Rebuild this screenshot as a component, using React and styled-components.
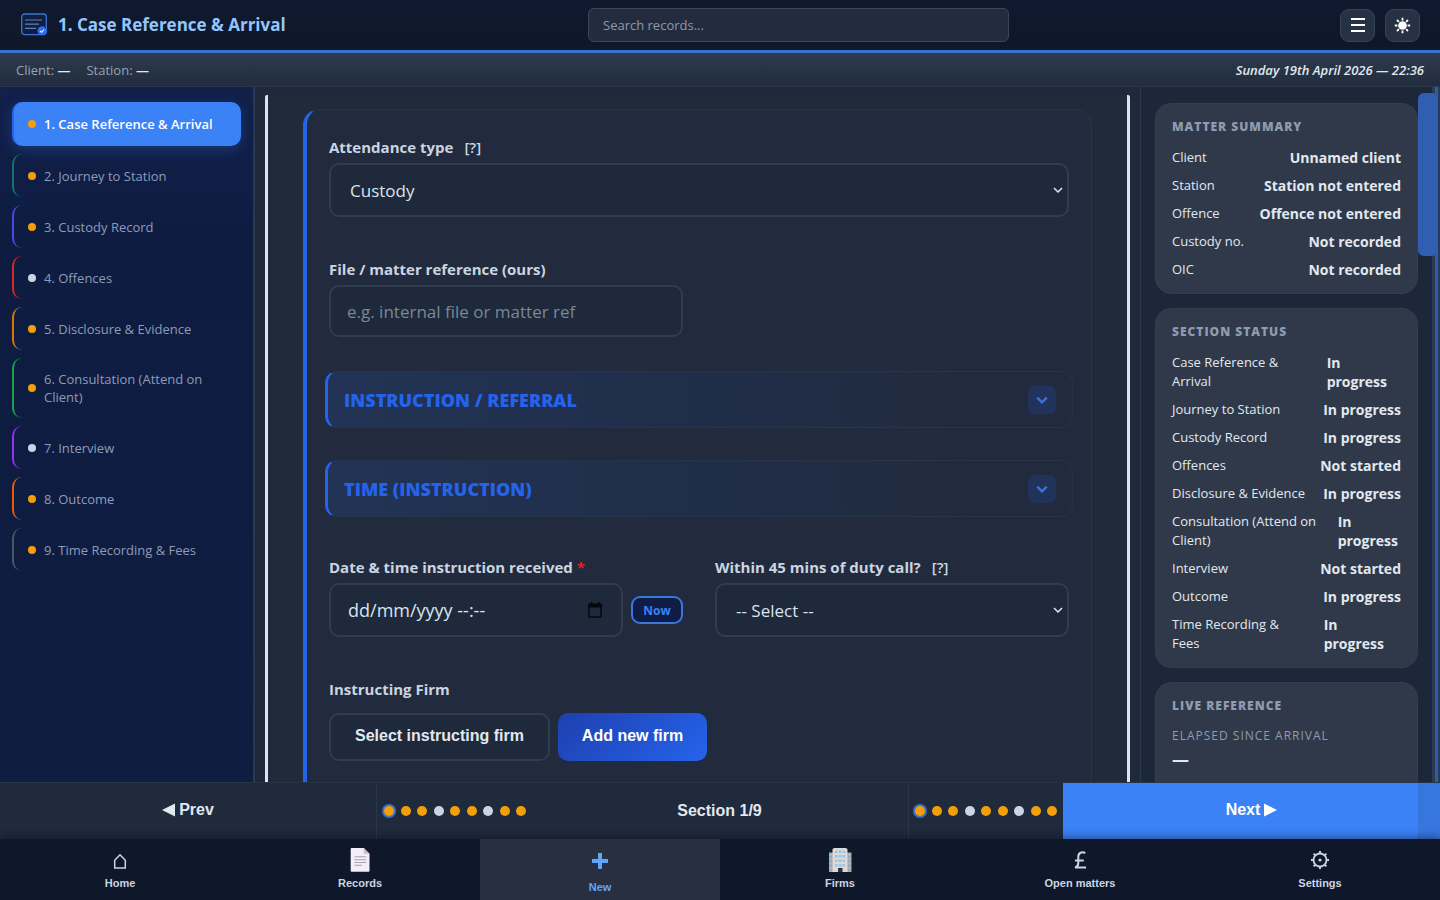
import React from 'react';
import styled, { createGlobalStyle, css } from 'styled-components';

const sans = '"Open Sans", "Noto Sans", sans-serif';
const ui = '"Liberation Sans", Arial, sans-serif';

const Global = createGlobalStyle`
  *, *::before, *::after { box-sizing: border-box; }
  body { margin: 0; background: #1e293b; color: #e2e8f0; font-family: ${sans}; }
  button, input, select { margin: 0; font: inherit; color: inherit; }
  button { cursor: pointer; }
  h1, h2, p, dl, dd, dt, ul { margin: 0; padding: 0; }
`;

const Page = styled.div`
  display: flex;
  flex-direction: column;
  height: 100vh;
  overflow: hidden;
`;

const Header = styled.header`
  display: grid;
  grid-template-columns: 568fr minmax(200px, 421px) 411fr;
  align-items: center;
  height: 53px;
  padding: 0 20px;
  flex: none;
  background: linear-gradient(#0f1a30, #0f172a);
  border-bottom: 3px solid #3b72d0;
`;
const Brand = styled.div`
  display: flex;
  align-items: center;
  gap: 10px;
`;
const Title = styled.h1`
  font-size: 17px;
  line-height: 24px;
  font-weight: 700;
  color: #93c5fd;
  white-space: nowrap;
`;
const Search = styled.input`
  width: 100%;
  height: 34px;
  padding: 0 14px;
  font-size: 13px;
  background: #232c3f;
  border: 1px solid #3b465a;
  border-radius: 6px;
  outline: none;
  &::placeholder { color: #8f98a8; opacity: 1; }
`;
const Tools = styled.div`
  display: flex;
  justify-content: flex-end;
  gap: 10px;
`;
const ToolButton = styled.button`
  display: grid;
  place-items: center;
  width: 35px;
  height: 33px;
  padding: 0;
  color: #fff;
  background: #273144;
  border: 1px solid #3a4456;
  border-radius: 9px;
`;

const InfoBar = styled.div`
  display: flex;
  align-items: center;
  gap: 16px;
  flex: none;
  height: 34px;
  padding: 0 16px;
  font-size: 13px;
  color: #94a3b8;
  background: linear-gradient(#2e3b4d, #212d3e);
  border-bottom: 1px solid #2b384b;
  b { color: #e2e8f0; }
`;
const Clock = styled.time`
  margin-left: auto;
  font-size: 13px;
  font-style: italic;
  font-weight: 600;
  color: #e2e8f0;
`;

const Body = styled.div`
  display: flex;
  flex: 1;
  min-height: 0;
  overflow: hidden;
`;

const Sidebar = styled.nav`
  display: flex;
  flex-direction: column;
  gap: 8px;
  flex: none;
  width: 255px;
  padding: 15px 12px;
  background: linear-gradient(#12204a, #0f1c42 20%, #101c40);
  border-right: 2px solid #2a3850;
`;
const NavItem = styled.button`
  display: flex;
  align-items: center;
  gap: 8px;
  width: 100%;
  min-height: 43px;
  padding: 4px 28px 4px 14px;
  font-size: 13px;
  line-height: 18px;
  font-weight: 500;
  text-align: left;
  color: #8c9cb8;
  background: transparent;
  border: 0 solid ${(p) => p.$accent};
  border-left-width: 2px;
  border-radius: 10px;
  ${(p) => p.$tall && css`min-height: 60px;`}
  ${(p) => p.$active && css`
    min-height: 44px;
    padding-right: 4px;
    font-weight: 600;
    color: #fff;
    background: #3b82f6;
    box-shadow: 0 4px 14px rgba(59, 130, 246, 0.25);
  `}
`;
const Dot = styled.span`
  flex: none;
  width: 8px;
  height: 8px;
  border-radius: 50%;
  background: ${(p) => (p.$done ? '#f59e0b' : '#cbd5e1')};
`;

const Main = styled.main`
  flex: 1;
  min-width: 0;
  margin: 8px 10px 0;
  padding: 14px 35px 0;
  overflow: hidden;
  background: #1f2a3b;
  border: solid #dbe4f0;
  border-width: 0 3px;
  border-radius: 2px 2px 0 0;
`;
const Card = styled.form`
  height: 900px;
  padding: 25px 22px;
  background: #212b3d;
  border: 1px solid #273549;
  border-left: 4px solid #2563eb;
  border-radius: 16px;
`;
const Fields = styled.div`
  display: grid;
  grid-template-columns: 1fr 1fr;
  column-gap: 32px;
`;
const Field = styled.div`
  display: flex;
  flex-direction: column;
  gap: 4px;
  margin-bottom: ${(p) => (p.$tight ? '34px' : '40px')};
  ${(p) => p.$wide && css`grid-column: 1 / -1;`}
`;
const Label = styled.label`
  font-size: 15px;
  line-height: 24px;
  font-weight: 700;
  color: #cbd5e1;
  white-space: pre;
  i { color: #dc2626; font-style: normal; }
`;
const Help = styled.span`
  margin-left: 11px;
  font-weight: 600;
`;
const control = css`
  width: 100%;
  height: 54px;
  font-family: ${sans};
  font-size: 17px;
  color: #dbe3ee;
  background: #1e293b;
  border: 2px solid #303c4f;
  border-radius: 10px;
  outline: none;
`;
const SelectWrap = styled.div`
  display: grid;
  align-items: center;
  > * { grid-area: 1 / 1; }
  > svg { justify-self: end; margin-right: 6px; pointer-events: none; }
`;
const Select = styled.select`
  ${control}
  padding: 0 19px;
  appearance: none;
`;
const TextInput = styled.input`
  ${control}
  height: 52px;
  padding: 0 16px;
  &::placeholder { color: #7b8798; opacity: 1; }
`;
const DateRow = styled.div`
  display: flex;
  align-items: center;
  gap: 8px;
`;
const DateBox = styled.div`
  display: grid;
  align-items: center;
  flex: 1;
  > * { grid-area: 1 / 1; }
  > svg { justify-self: end; margin-right: 20px; pointer-events: none; }
`;
const DateInput = styled.input`
  ${control}
  padding: 0 17px;
  font-size: 18px;
  &::placeholder { color: #dbe3ee; opacity: 1; }
`;
const NowButton = styled.button`
  width: 52px;
  height: 28px;
  padding: 0;
  font-size: 12px;
  font-weight: 700;
  color: #3b82f6;
  background: #0f1d45;
  border: 2px solid #3b76dc;
  border-radius: 9px;
`;

const Groups = styled.div`
  grid-column: 1 / -1;
  display: flex;
  flex-direction: column;
  gap: 32px;
  margin: 0 -4px 38px;
`;
const Group = styled.button`
  display: flex;
  align-items: center;
  justify-content: space-between;
  height: 57px;
  padding: 0 16px;
  font-size: 18px;
  font-weight: 800;
  color: #2563eb;
  background: linear-gradient(90deg, #223355, #202d47 55%, #212b3d 90%);
  border: 1px solid #263449;
  border-left: 3px solid #2563eb;
  border-radius: 12px;
`;
const Chevron = styled.span`
  display: grid;
  place-items: center;
  width: 28px;
  height: 28px;
  color: #3b72d8;
  background: #21335a;
  border-radius: 7px;
`;
const Actions = styled.div`
  display: flex;
  gap: 8px;
  margin-top: 8px;
`;
const FirmButton = styled.button`
  width: ${(p) => (p.$primary ? '149px' : '221px')};
  height: 48px;
  padding: 0 0 2px;
  font-family: ${ui};
  font-size: 16px;
  font-weight: 700;
  color: ${(p) => (p.$primary ? '#fff' : '#e2e8f0')};
  background: ${(p) => (p.$primary ? 'linear-gradient(135deg, #1e40af, #2563eb)' : '#1e293b')};
  border: ${(p) => (p.$primary ? '0' : '2px solid #303c4f')};
  border-radius: 10px;
`;

const Aside = styled.aside`
  display: flex;
  flex-direction: column;
  gap: 14px;
  flex: none;
  width: 278px;
  padding: 16px 0 0 14px;
  background: #1c2739;
  border-left: 1px solid #2a3850;
`;
const Panel = styled.section`
  flex: none;
  padding: 12px 16px 10px;
  background: #2f3949;
  border: 1px solid #333f50;
  border-radius: 16px;
`;
const PanelTitle = styled.h2`
  margin-bottom: 5px;
  font-size: 12px;
  line-height: 22px;
  font-weight: 800;
  letter-spacing: 1px;
  color: #8e9bb0;
`;
const Rows = styled.dl`
  display: flex;
  flex-direction: column;
`;
const Row = styled.div`
  display: flex;
  justify-content: space-between;
  gap: 8px;
  min-height: 28px;
  padding: 5px 0 4px;
  font-size: 13px;
  line-height: 19px;
  dt { white-space: pre-line; }
  dd {
    font-size: 14px;
    font-weight: 700;
    white-space: pre-line;
    padding-right: ${(p) => p.$inset || 0}px;
  }
`;
const Elapsed = styled.p`
  font-size: 12px;
  line-height: 28px;
  font-weight: 500;
  letter-spacing: 1px;
  color: #8e9bb0;
`;
const ElapsedValue = styled.p`
  font-size: 17px;
  line-height: 20px;
  height: 120px;
  font-weight: 700;
`;

const Track = styled.div`
  flex: none;
  width: 22px;
  background: linear-gradient(90deg, #1c2739 14px, #2c3b55 14px 17px, #2f5cab 17px 20px, #2c3b55 20px);
`;
const Thumb = styled.div`
  width: 20px;
  height: 163px;
  margin-top: 6px;
  background: #305fb2;
  border-radius: 6px;
`;

const Pager = styled.div`
  display: grid;
  grid-template-columns: 377fr 532fr 154fr 377fr;
  flex: none;
  height: 57px;
  background: #1f2a3c;
  border-top: 1px solid #263448;
  font-family: ${ui};
  font-size: 16px;
  font-weight: 700;
`;
const PagerButton = styled.button`
  display: flex;
  align-items: center;
  justify-content: center;
  gap: 4px;
  padding: 0 0 2px;
  border: 0;
  border-right: ${(p) => (p.$next ? '0' : '1px solid #2a374a')};
  color: ${(p) => (p.$next ? '#fff' : '#e2e8f0')};
  background: ${(p) => (p.$next
    ? 'linear-gradient(90deg, #3b82f6 calc(100% - 22px), #3876df calc(100% - 22px))'
    : 'transparent')};
`;
const PagerMiddle = styled.div`
  display: flex;
  align-items: center;
  padding-left: 7px;
  border-right: 1px solid #2a374a;
`;
const PagerLabel = styled.span`
  flex: 1;
  padding-left: 5px;
  text-align: center;
`;
const DotRow = styled.div`
  display: flex;
  flex: none;
  align-items: center;
  justify-content: space-between;
  width: 142px;
`;
const StepDot = styled.span`
  flex: none;
  width: 10px;
  height: 10px;
  border-radius: 50%;
  background: ${(p) => (p.$done ? '#f59e0b' : '#cbd5e1')};
  ${(p) => p.$current && css`box-shadow: 0 0 0 2px #3b72c8;`}
`;
const PagerDots = styled.div`
  display: flex;
  align-items: center;
  padding-left: 6px;
`;

const Tabs = styled.nav`
  display: grid;
  grid-template-columns: repeat(6, 1fr);
  flex: none;
  height: 61px;
  background: #0f172a;
  box-shadow: 0 -2px 8px rgba(8, 14, 28, 0.45);
  z-index: 1;
`;
const Tab = styled.a`
  display: flex;
  flex-direction: column;
  align-items: center;
  gap: ${(p) => (p.$active ? '7px' : '3px')};
  padding-top: 8px;
  font-family: ${ui};
  font-size: 11px;
  line-height: 14px;
  font-weight: 700;
  text-decoration: none;
  color: ${(p) => (p.$active ? '#60a5fa' : '#cbd5e1')};
  background: ${(p) => (p.$active ? '#282f41' : 'transparent')};
  svg { display: block; }
`;

const Logo = () => (
  <svg width="28" height="26" viewBox="0 0 28 26" fill="none" aria-hidden="true">
    <rect x="1.7" y="2" width="24.6" height="20.6" rx="3" fill="#101f40" stroke="#3b73cf" strokeWidth="1.3" />
    <path d="M5 8h17M5 12.2h14M5 16.4h11" stroke="#5d82bd" strokeWidth="1.2" />
    <circle cx="22" cy="18.8" r="4.5" fill="#2f6df0" />
    <path d="M20 18.8l1.5 1.5 2.6-2.800" stroke="#fff" strokeWidth="1.1" />
  </svg>
);
const SunIcon = () => (
  <svg width="17" height="17" viewBox="0 0 17 17" aria-hidden="true">
    <circle cx="8.5" cy="8.5" r="4.3" fill="#fff" />
    <path d="M8.5 .8v2.600M8.5 13.600v2.600M.8 8.500h2.600M13.600 8.500h2.600M3 3l1.900 1.900M12.100 12.100l1.900 1.900M14 3l-1.900 1.900M4.900 12.100L3 14" stroke="#fff" strokeWidth="1.8" />
  </svg>
);
const MenuIcon = () => (
  <svg width="14" height="14" viewBox="0 0 14 14" aria-hidden="true">
    <path d="M0 1h14M0 7h14M0 13h14" stroke="#fff" strokeWidth="2" />
  </svg>
);
const Down = ({ w = 10, sw = 1.5 }) => (
  <svg width={w} height={w} viewBox="0 0 10 10" fill="none" stroke="currentColor" strokeWidth={sw} aria-hidden="true">
    <path d="M1 3l4 4 4-4" />
  </svg>
);
const CalendarIcon = () => (
  <svg width="16" height="18" viewBox="0 0 16 18" aria-hidden="true">
    <path d="M1.900 4.500h12.200v10.600a.9.9 0 0 1-.9.9H2.800a.9.9 0 0 1-.9-.9z" fill="none" stroke="#05080d" strokeWidth="1.5" />
    <path d="M1.200 2.500h13.600v4H1.200zM3.500 1h1.800v2H3.500zM10.700 1h1.800v2h-1.800z" fill="#05080d" />
  </svg>
);
const Triangle = ({ left }) => (
  <svg width="13" height="14" viewBox="0 0 13 14" fill="currentColor" aria-hidden="true">
    <path d={left ? 'M13 0.500v13L0 7z' : 'M0 0.500v13L13 7z'} />
  </svg>
);

const HomeIcon = () => (
  <svg width="26" height="26" viewBox="0 0 26 26" fill="none" stroke="#cbd5e1" strokeWidth="1.5" aria-hidden="true">
    <path d="M7.700 21v-7.700L13 7.800l5.300 5.500V21z" />
  </svg>
);
const RecordsIcon = () => (
  <svg width="26" height="26" viewBox="0 0 26 26" aria-hidden="true">
    <path d="M4.500 1h12.300l5.700 5.700V24a.8.8 0 0 1-.8.8H4.500a.8.8 0 0 1-.8-.8V1.800a.8.8 0 0 1 .8-.8z" fill="#f3eef8" />
    <path d="M16.800 1v5.700h5.700z" fill="#c5bdcc" />
    <path d="M7.500 9.800h11.800M7.500 12.800h11.800M7.500 15.500h11.800M7.500 18.300h7.500" stroke="#aaa2b4" strokeWidth="1" />
  </svg>
);
const PlusIcon = () => (
  <svg width="26" height="26" viewBox="0 0 26 26" aria-hidden="true">
    <path d="M13 6v16M5 14h16" stroke="#60a5fa" strokeWidth="4" />
  </svg>
);
const FirmsIcon = () => (
  <svg width="26" height="26" viewBox="0 0 26 26" aria-hidden="true">
    <path d="M2 5.500h22.500V25H2z" fill="#a9a5a6" />
    <path d="M5.500 2.200L7 1h12l1.500 1.200V25h-15z" fill="#dedad8" />
    <g fill="#8cc8ef">
      {[3.5, 8, 12.5, 17].map((y) => (
        <path key={y} d={`M8 ${y}h2.500v2.500H8zM11.600 ${y}h2.900v2.500h-2.900zM15.600 ${y}h2.500v2.500h-2.500zM2.500 ${y + 3}h2v2h-2zM21.700 ${y + 3}h2v2h-2z`} />
      ))}
    </g>
    <path d="M11 21h4.500v4H11z" fill="#332f35" />
  </svg>
);
const PoundIcon = () => (
  <svg width="26" height="26" viewBox="0 0 26 26" fill="none" stroke="#cbd5e1" strokeWidth="2" aria-hidden="true">
    <path d="M18.300 6c-3.200-1.500-7-.4-7 3.700V16c0 2.200-1 3.800-3.200 4.600h11M8 13.500h8.800" />
  </svg>
);
const GearIcon = () => (
  <svg width="26" height="26" viewBox="0 0 26 26" fill="none" stroke="#cbd5e1" aria-hidden="true">
    <circle cx="13" cy="13" r="6.500" strokeWidth="1.800" />
    <circle cx="13" cy="13" r="1.600" fill="#cbd5e1" stroke="none" />
    <path d="M13 4v2.500M13 19.500V22M4 13h2.500M19.500 13H22M6.600 6.600l1.800 1.800M17.600 17.600l1.800 1.800M19.400 6.600l-1.800 1.800M8.400 17.600l-1.800 1.800" strokeWidth="2" />
  </svg>
);

const sections = [
  { name: '1. Case Reference & Arrival', accent: '#2563eb', done: true, active: true },
  { name: '2. Journey to Station', accent: '#0f766e', done: true },
  { name: '3. Custody Record', accent: '#4f46e5', done: true },
  { name: '4. Offences', accent: '#dc2626', done: false },
  { name: '5. Disclosure & Evidence', accent: '#d97706', done: true },
  { name: '6. Consultation (Attend on Client)', accent: '#16a34a', done: true, tall: true },
  { name: '7. Interview', accent: '#9333ea', done: false },
  { name: '8. Outcome', accent: '#ea580c', done: true },
  { name: '9. Time Recording & Fees', accent: '#475569', done: true },
];
const summary = [
  ['Client', 'Unnamed client'],
  ['Station', 'Station not entered'],
  ['Offence', 'Offence not entered'],
  ['Custody no.', 'Not recorded'],
  ['OIC', 'Not recorded'],
];
const statuses = [
  ['Case Reference &\nArrival', 'In\nprogress', 14],
  ['Journey to Station', 'In progress'],
  ['Custody Record', 'In progress'],
  ['Offences', 'Not started'],
  ['Disclosure & Evidence', 'In progress'],
  ['Consultation (Attend on\nClient)', 'In\nprogress', 3],
  ['Interview', 'Not started'],
  ['Outcome', 'In progress'],
  ['Time Recording &\nFees', 'In\nprogress', 17],
];
const tabs = [
  ['Home', HomeIcon],
  ['Records', RecordsIcon],
  ['New', PlusIcon],
  ['Firms', FirmsIcon],
  ['Open matters', PoundIcon],
  ['Settings', GearIcon],
];

const Steps = () => (
  <DotRow>
    {sections.map((s) => (
      <StepDot key={s.name} $done={s.done} $current={s.active} />
    ))}
  </DotRow>
);

const StatusList = ({ rows }) => (
  <Rows>
    {rows.map(([k, v, inset]) => (
      <Row key={k} $inset={inset}>
        <dt>{k}</dt>
        <dd>{v}</dd>
      </Row>
    ))}
  </Rows>
);

export default function App() {
  return (
    <Page>
      <Global />
      <Header>
        <Brand>
          <Logo />
          <Title>1. Case Reference &amp; Arrival</Title>
        </Brand>
        <Search type="search" placeholder="Search records..." aria-label="Search records" />
        <Tools>
          <ToolButton aria-label="Menu"><MenuIcon /></ToolButton>
          <ToolButton aria-label="Toggle theme"><SunIcon /></ToolButton>
        </Tools>
      </Header>
      <InfoBar>
        <span>Client: <b>—</b></span>
        <span>Station: <b>—</b></span>
        <Clock dateTime="2026-04-19T22:36">Sunday 19th April 2026 — 22:36</Clock>
      </InfoBar>
      <Body>
        <Sidebar aria-label="Sections">
          {sections.map((s) => (
            <NavItem key={s.name} $accent={s.accent} $active={s.active} $tall={s.tall}>
              <Dot $done={s.done} />
              <span>{s.name}</span>
            </NavItem>
          ))}
        </Sidebar>
        <Main>
          <Card>
            <Fields>
              <Field $wide>
                <Label htmlFor="attendance">Attendance type<Help>[?]</Help></Label>
                <SelectWrap>
                  <Select id="attendance"><option>Custody</option></Select>
                  <Down />
                </SelectWrap>
              </Field>
              <Field $tight>
                <Label htmlFor="reference">File / matter reference (ours)</Label>
                <TextInput id="reference" placeholder="e.g. internal file or matter ref" />
              </Field>
              <Groups>
                <Group type="button">
                  INSTRUCTION / REFERRAL
                  <Chevron><Down w={12} sw={2} /></Chevron>
                </Group>
                <Group type="button">
                  TIME (INSTRUCTION)
                  <Chevron><Down w={12} sw={2} /></Chevron>
                </Group>
              </Groups>
              <Field>
                <Label htmlFor="received">Date &amp; time instruction received <i>*</i></Label>
                <DateRow>
                  <DateBox>
                    <DateInput id="received" placeholder="dd/mm/yyyy --:--" />
                    <CalendarIcon />
                  </DateBox>
                  <NowButton type="button">Now</NowButton>
                </DateRow>
              </Field>
              <Field>
                <Label htmlFor="within">Within 45 mins of duty call?<Help>[?]</Help></Label>
                <SelectWrap>
                  <Select id="within"><option>-- Select --</option></Select>
                  <Down />
                </SelectWrap>
              </Field>
              <Field $wide>
                <Label as="span">Instructing Firm</Label>
                <Actions>
                  <FirmButton type="button">Select instructing firm</FirmButton>
                  <FirmButton type="button" $primary>Add new firm</FirmButton>
                </Actions>
              </Field>
            </Fields>
          </Card>
        </Main>
        <Aside>
          <Panel>
            <PanelTitle>MATTER SUMMARY</PanelTitle>
            <StatusList rows={summary} />
          </Panel>
          <Panel>
            <PanelTitle>SECTION STATUS</PanelTitle>
            <StatusList rows={statuses} />
          </Panel>
          <Panel>
            <PanelTitle>LIVE REFERENCE</PanelTitle>
            <Elapsed>ELAPSED SINCE ARRIVAL</Elapsed>
            <ElapsedValue>—</ElapsedValue>
          </Panel>
        </Aside>
        <Track><Thumb /></Track>
      </Body>
      <Pager>
        <PagerButton><Triangle left /> Prev</PagerButton>
        <PagerMiddle>
          <Steps />
          <PagerLabel>Section 1/9</PagerLabel>
        </PagerMiddle>
        <PagerDots><Steps /></PagerDots>
        <PagerButton $next>Next <Triangle /></PagerButton>
      </Pager>
      <Tabs aria-label="Main">
        {tabs.map(([name, Icon]) => (
          <Tab key={name} href={`#${name}`} $active={name === 'New'}>
            <Icon />
            {name}
          </Tab>
        ))}
      </Tabs>
    </Page>
  );
}
